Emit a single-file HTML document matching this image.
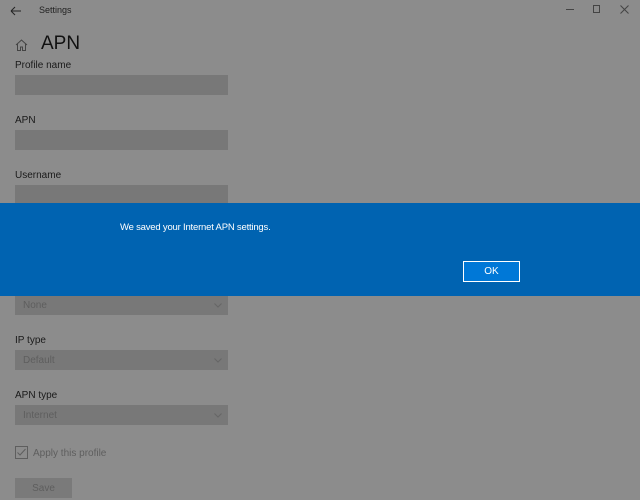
<!DOCTYPE html>
<html><head><meta charset="utf-8"><style>
*{margin:0;padding:0;box-sizing:border-box}
body{width:640px;height:500px;background:#8c8c8c;font-family:"Liberation Sans",sans-serif;position:relative;overflow:hidden;color:#111}
.a{position:absolute}
.lbl{font-size:10px;color:#1a1a1a}
.box{background:#787878;width:213px;height:20px}
.dd{background:#787878;width:213px;height:20px;color:#5e5e5e;font-size:10px;padding:5px 8px;position:absolute}
.dd svg{position:absolute;right:6px;top:8px}
</style></head><body>
<svg class="a" style="left:10px;top:6px" width="12" height="10"><path d="M1 5H11M1 5L5 1M1 5L5 9" stroke="#222" fill="none" stroke-width="1"/></svg>
<div class="a" style="left:39px;top:5px;font-size:9px;color:#222">Settings</div>
<div class="a" style="left:566px;top:9px;width:8px;height:1px;background:#444"></div>
<div class="a" style="left:593px;top:5px;width:7px;height:8px;border:1px solid #444"></div>
<svg class="a" style="left:620px;top:5px" width="9" height="9"><path d="M0.5 0.5L8.5 8.5M8.5 0.5L0.5 8.5" stroke="#444"/></svg>
<svg class="a" style="left:15px;top:39px" width="13" height="12"><path d="M1 6L6.5 1L12 6M2.5 5V11.5H5.5V8H7.5V11.5H10.5V5" stroke="#444" fill="none"/></svg>
<div class="a" style="left:41px;top:33px;font-size:19px;color:#111">APN</div>
<div class="a lbl" style="left:15px;top:60px">Profile name</div>
<div class="a box" style="left:15px;top:75px"></div>
<div class="a lbl" style="left:15px;top:115px">APN</div>
<div class="a box" style="left:15px;top:130px"></div>
<div class="a lbl" style="left:15px;top:170px">Username</div>
<div class="a box" style="left:15px;top:185px"></div>
<div class="dd" style="left:15px;top:295px">None<svg width="8" height="5"><path d="M0.5 0.5L4 4L7.5 0.5" stroke="#666" fill="none"/></svg></div>
<div class="a lbl" style="left:15px;top:335px">IP type</div>
<div class="dd" style="left:15px;top:350px">Default<svg width="8" height="5"><path d="M0.5 0.5L4 4L7.5 0.5" stroke="#666" fill="none"/></svg></div>
<div class="a lbl" style="left:15px;top:390px">APN type</div>
<div class="dd" style="left:15px;top:405px">Internet<svg width="8" height="5"><path d="M0.5 0.5L4 4L7.5 0.5" stroke="#666" fill="none"/></svg></div>
<svg class="a" style="left:15px;top:446px" width="13" height="13"><rect x="0.5" y="0.5" width="12" height="12" stroke="#5e5e5e" fill="none"/><path d="M2.5 6.5L5 9L10.5 3" stroke="#5e5e5e" fill="none"/></svg>
<div class="a" style="left:33px;top:448px;font-size:10px;color:#5e5e5e">Apply this profile</div>
<div class="a" style="left:15px;top:478px;width:57px;height:20px;background:#7a7a7a;color:#5e5e5e;font-size:10px;text-align:center;line-height:21px">Save</div>
<div class="a" style="left:0;top:203px;width:640px;height:93px;background:#0063b1"></div>
<div class="a" style="left:120px;top:222px;font-size:9.5px;letter-spacing:-0.2px;color:#fff">We saved your Internet APN settings.</div>
<div class="a" style="left:463px;top:261px;width:57px;height:21px;background:#0078d7;border:1.5px solid #fff;color:#fff;font-size:10px;text-align:center;line-height:19px">OK</div>
</body></html>
